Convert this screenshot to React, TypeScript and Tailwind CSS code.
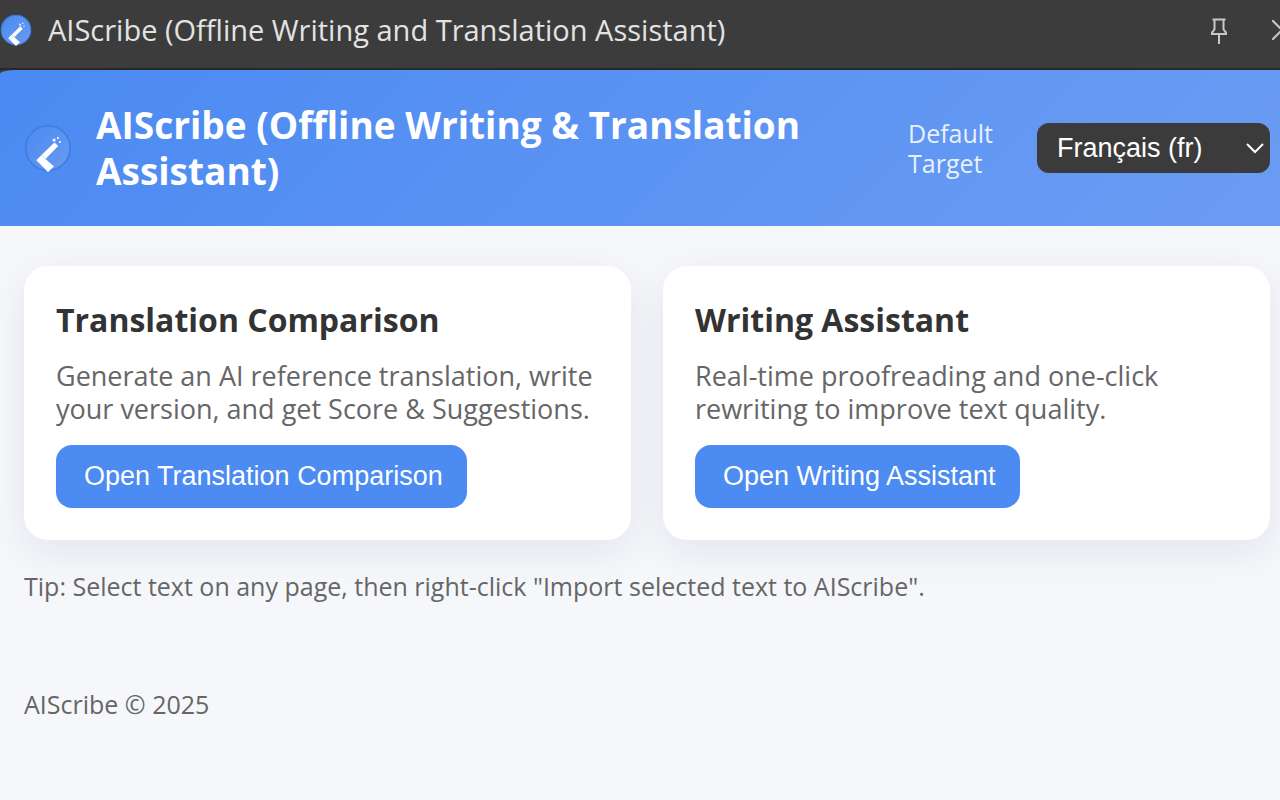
import { X } from "lucide-react";

function Logo({ className, id }: { className: string; id: string }) {
  return (
    <svg viewBox="0 0 48 48" className={className} aria-hidden="true">
      <defs>
        <linearGradient id={id} x1="0" y1="0" x2="1" y2="1">
          <stop offset="0" stopColor="#4a8af0" />
          <stop offset="1" stopColor="#699bf2" />
        </linearGradient>
      </defs>
      <circle cx="24" cy="24" r="22.2" fill={`url(#${id})`} stroke="#3f7cdf" strokeWidth="1.6" />
      <path d="M30.500 18.500L34.200 22L21.500 35L17.500 31Z" fill="#fff" />
      <path d="M17.300 31.200L30 42.500L24 48L12.300 36.300Z" fill="#fff" />
      <rect x="28.700" y="14.700" width="2.800" height="2.800" fill="#e9f1fe" />
      <rect x="33" y="13" width="2" height="2" fill="#dce8fd" />
      <rect x="35" y="17" width="2" height="2" fill="#dce8fd" />
    </svg>
  );
}

interface CardProps {
  title: string;
  lines: [string, string];
  action: string;
}

function Card({ title, lines, action }: CardProps) {
  return (
    <section className="rounded-3xl bg-white p-8 shadow-[0_12px_40px_rgba(30,30,50,0.08)]">
      <h2 className="mb-[18px] text-[32px] leading-[43px] font-bold text-[#333]">{title}</h2>
      <p className="mb-5 text-[27px] leading-[33px] text-[#666]">
        {lines[0]}
        <br />
        {lines[1]}
      </p>
      <button type="button" className="h-[63px] rounded-2xl bg-[#4b8bf2] pr-6 pb-0.5 pl-7 font-['Liberation_Sans',sans-serif] text-[27px] leading-8 text-white">
        {action}
      </button>
    </section>
  );
}

export default function App() {
  return (
    <div className="min-h-screen overflow-hidden bg-[#f5f7fb] font-['Open_Sans','Noto_Sans',sans-serif] [font-variant-ligatures:none]">
      <div className="bg-[#3c3c3c]">
        <div className="flex h-[70px] items-center overflow-hidden border-b-2 border-[#282828] pb-2">
          <Logo id="bar-logo" className="h-8 w-8 shrink-0" />
          <span className="ml-4 text-[29px] leading-10 whitespace-nowrap text-[#e3e3e3]">
            AIScribe (Offline Writing and Translation Assistant)
          </span>
          <button type="button" aria-label="Pin" className="ml-auto shrink-0 pt-0.5 text-[#c7c7c7]">
            <svg viewBox="0 0 18 28" className="h-7 w-[18px]" fill="none" stroke="currentColor" strokeWidth="2">
              <path d="M2.500 2.500H15.500M4.500 2.500V12.500L2 15.500V17H16V15.500L13.500 12.500V2.500M9 17V27" />
            </svg>
          </button>
          <button type="button" aria-label="Close" className="-mr-5 ml-9 shrink-0 text-[#c7c7c7]">
            <X size={36} strokeWidth={1.5} />
          </button>
        </div>
        <header className="flex items-center rounded-tl-[16px_4px] bg-linear-135 from-[#4a8af2] to-[#6b9cf3] py-8 pr-[10px] pl-6">
          <Logo id="header-logo" className="h-12 w-12 shrink-0" />
          <h1 className="ml-6 text-[37px] leading-[46px] font-bold text-white">
            AIScribe (Offline Writing &amp; Translation
            <br />
            Assistant)
          </h1>
          <div className="ml-auto flex shrink-0 items-center">
            <label htmlFor="target" className="w-[129px] text-[25px] leading-[30px] text-[#e9f0fe]">
              Default
              <br />
              Target
            </label>
            <div className="relative">
              <select
                id="target"
                defaultValue="fr"
                className="h-[50px] w-[233px] appearance-none rounded-xl bg-[#3b3b3b] px-5 font-['Liberation_Sans',sans-serif] text-[27px] leading-8 text-white"
              >
                <option value="fr">Français (fr)</option>
              </select>
              <svg viewBox="0 0 18 12" className="pointer-events-none absolute top-5 right-1.5 h-3 w-[18px]" fill="none" stroke="#fff" strokeWidth="2">
                <path d="M1 1L9 9L17 1" />
              </svg>
            </div>
          </div>
        </header>
      </div>
      <main className="pt-10 pr-[10px] pl-6">
        <div className="grid grid-cols-2 gap-8">
          <Card
            title="Translation Comparison"
            lines={["Generate an AI reference translation, write", "your version, and get Score & Suggestions."]}
            action="Open Translation Comparison"
          />
          <Card
            title="Writing Assistant"
            lines={["Real-time proofreading and one-click", "rewriting to improve text quality."]}
            action="Open Writing Assistant"
          />
        </div>
        <p className="mt-[30px] text-[25px] leading-8 text-[#666]">
          Tip: Select text on any page, then right-click "Import selected text to AIScribe".
        </p>
      </main>
      <footer className="mt-[86px] px-6 text-[25px] leading-8 text-[#666]">AIScribe © 2025</footer>
    </div>
  );
}
